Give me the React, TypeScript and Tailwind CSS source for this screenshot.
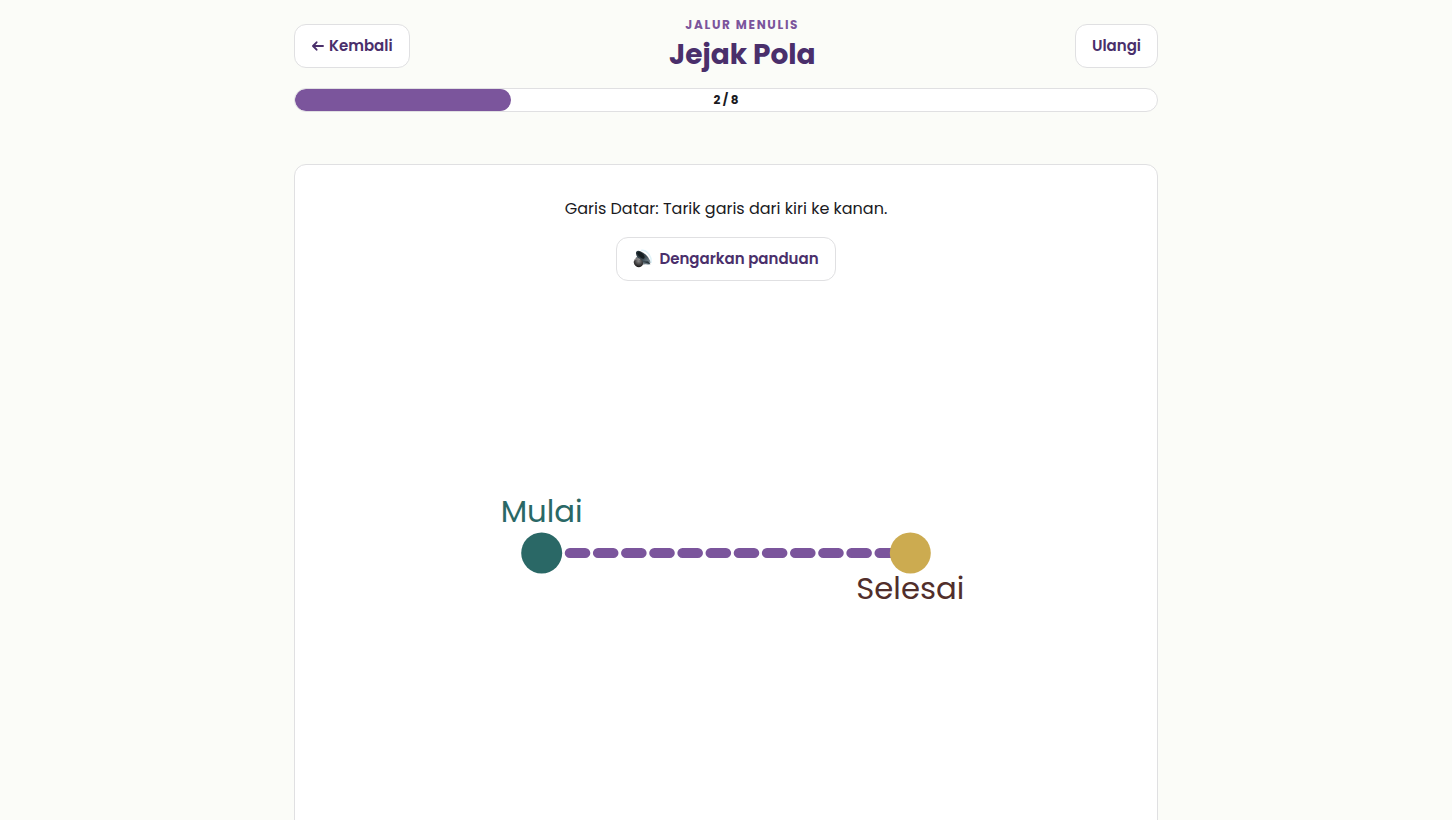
import React, { useState } from "react";

const TOTAL_STEPS = 8;

const buttonClass =
  "flex h-11 items-center justify-center rounded-xl border border-[#e0e0e2] bg-white px-4 text-[15px] font-semibold whitespace-nowrap text-[#4a2f6b]";

function BackArrow() {
  return (
    <svg
      viewBox="0 0 13 12"
      className="h-3 w-[13px]"
      fill="none"
      stroke="currentColor"
      strokeWidth="1.9"
      strokeLinecap="round"
      strokeLinejoin="round"
      aria-hidden="true"
    >
      <path d="M12 6H2.2M5.6 2.3L2 6L5.6 9.7" />
    </svg>
  );
}

function SpeakerIcon() {
  return (
    <svg viewBox="0 0 20 20" className="h-5 w-5" aria-hidden="true">
      <defs>
        <linearGradient id="cone" x1="0" y1="0" x2="1" y2="0">
          <stop offset="0" stopColor="#26323a" />
          <stop offset="0.55" stopColor="#3d4c54" />
          <stop offset="1" stopColor="#8b9ca5" />
        </linearGradient>
        <radialGradient id="magnet" cx="0.4" cy="0.35" r="0.7">
          <stop offset="0" stopColor="#8b8b8b" />
          <stop offset="0.5" stopColor="#4c4a4b" />
          <stop offset="1" stopColor="#151515" />
        </radialGradient>
      </defs>
      <path d="M8 1.4C13.5 0.6 18.8 6.4 18.2 14" fill="none" stroke="#dff2f8" strokeWidth="1.4" />
      <path d="M2.5 9L5 6.5L14 15L8 16Z" fill="#7c858a" />
      <ellipse cx="10.2" cy="8.8" rx="9.2" ry="4" transform="rotate(43 10.2 8.8)" fill="url(#cone)" />
      <ellipse cx="8" cy="6.2" rx="4.4" ry="2.2" transform="rotate(43 8 6.2)" fill="#141d21" />
      <path d="M9.5 12.4L17.4 15.6L15.2 12.2Z" fill="#2b363c" />
      <ellipse cx="5.4" cy="13.6" rx="4.9" ry="4.3" transform="rotate(40 5.4 13.6)" fill="url(#magnet)" />
      <path d="M1.4 11.4C2.6 9.8 4.6 9.4 6.8 10.4" fill="none" stroke="#b5b3b4" strokeWidth="0.8" />
    </svg>
  );
}

function ProgressBar({ value, total }: { value: number; total: number }) {
  return (
    <div
      role="progressbar"
      aria-label="Kemajuan"
      aria-valuenow={value}
      aria-valuemin={0}
      aria-valuemax={total}
      className="relative mt-3 h-6 overflow-hidden rounded-full border border-[#e0e0e2] bg-white"
    >
      <div
        className="h-full rounded-full bg-[#7b559c]"
        style={{ width: `${(value / total) * 100}%` }}
      />
      <span className="absolute inset-0 flex items-center justify-center text-xs font-bold text-[#1a1a1e]">
        {value} / {total}
      </span>
    </div>
  );
}

function TraceBoard() {
  return (
    <svg viewBox="0 0 100 100" className="w-full max-w-lg" aria-label="Papan jejak garis datar">
      <path
        d="M14 50H86"
        fill="none"
        stroke="#7b559c"
        strokeWidth="2"
        strokeLinecap="round"
        strokeDasharray="3 2.5"
      />
      <circle cx="14" cy="50" r="4" fill="#2a6866" />
      <circle cx="86" cy="50" r="4" fill="#ccab50" />
      <text x="14" y="44" textAnchor="middle" fontSize="6" fill="#2a6866">
        Mulai
      </text>
      <text x="86" y="59" textAnchor="middle" fontSize="6" fill="#512e2b">
        Selesai
      </text>
    </svg>
  );
}

export default function App() {
  const [step, setStep] = useState(2);

  return (
    <div className="min-h-screen bg-[#fbfcf8] font-[Poppins,Inter,sans-serif] text-[#1a1a1e]">
      <main className="mx-auto max-w-4xl px-4 py-4">
        <header className="flex items-center justify-between gap-3">
          <button type="button" className={`${buttonClass} gap-[5px]`}>
            <BackArrow />
            Kembali
          </button>
          <div className="text-center">
            <p className="text-xs leading-[18px] font-bold tracking-[0.14em] text-[#7b559c] uppercase">
              Jalur Menulis
            </p>
            <h1 className="text-[28px] leading-[42px] font-bold text-[#4a2f6b]">Jejak Pola</h1>
          </div>
          <button type="button" className={buttonClass} onClick={() => setStep(1)}>
            Ulangi
          </button>
        </header>

        <ProgressBar value={step} total={TOTAL_STEPS} />

        <section className="mt-13 flex flex-col items-center gap-4 rounded-xl border border-[#e0e0e2] bg-white px-4 py-8">
          <p className="text-center text-base">Garis Datar: Tarik garis dari kiri ke kanan.</p>
          <button type="button" className={`${buttonClass} gap-1.5`}>
            <SpeakerIcon />
            Dengarkan panduan
          </button>
          <TraceBoard />
        </section>
      </main>
    </div>
  );
}
